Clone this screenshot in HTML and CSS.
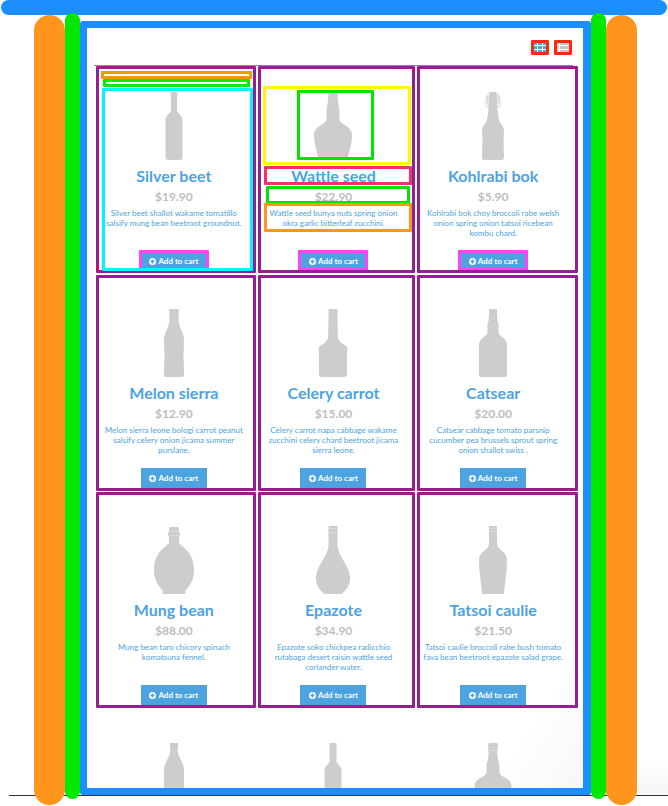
FILE: index.html
```
<!DOCTYPE html>
<html lang="en">
<head>
<meta charset="utf-8">
<meta name="viewport" content="width=device-width, initial-scale=1">
<title>Products</title>
<link rel="stylesheet" href="styles.css">
</head>
<body>
<svg class="defs" width="0" height="0" aria-hidden="true">
  <symbol id="plus" viewBox="0 0 14 14">
    <path fill="#fff" fill-rule="evenodd" d="M7 0a7 7 0 1 0 0 14A7 7 0 0 0 7 0ZM5.500 3h3v2.500H11v3H8.500V11h-3V8.500H3v-3h2.500Z"/>
  </symbol>
</svg>
<div class="topbar"></div>
<div class="stage">
  <div class="rail orange"></div>
  <div class="rail green"></div>
  <main class="frame">
    <header class="tools">
      <button class="toggle" type="button" aria-label="Grid view">
        <svg viewBox="0 0 12 9"><path fill="#4da3df" d="M0 0h12v9H0z"/><path stroke="#fff" fill="none" d="M3.500 0v9M8.500 0v9M0 2.500h12M0 6.500h12"/></svg>
      </button>
      <button class="toggle" type="button" aria-label="List view">
        <svg viewBox="0 0 12 9"><path fill="#c8c8c8" d="M0 0h12v9H0z"/><path stroke="#fff" fill="none" d="M2.500 0v9M0 2.500h12M0 6.500h12"/></svg>
      </button>
    </header>
    <section class="grid">
      <article class="card row1 col1">
        <svg class="bottle" viewBox="0 0 60 68"><path d="M26.500 0H33.500V5L33 5.500V18C33 21 38.500 23 38.500 28V65Q38.500 68 36 68H24Q21.500 68 21.500 65V28C21.500 23 27 21 27 18V5.500L26.500 5Z"/></svg>
        <h2>Silver beet</h2>
        <p class="price">$19.90</p>
        <p class="desc">Silver beet shallot wakame tomatillo salsify mung bean beetroot groundnut.</p>
        <button class="cart marked" type="button"><svg><use href="#plus"/></svg>Add to cart</button>
        <span class="mark orange-a"></span>
        <span class="mark green-a"></span>
        <span class="mark cyan"></span>
      </article>
      <article class="card row1 col2">
        <svg class="bottle" viewBox="0 0 60 68"><path d="M25.500 0H34.500L35 9L36.500 18V28C38 33 49 34 49 43C49 52 46 60 44 68H16C14 60 11 52 11 43C11 34 22 33 23.500 28V18L25 9Z"/></svg>
        <h2>Wattle seed</h2>
        <p class="price">$22.90</p>
        <p class="desc">Wattle seed bunya nuts spring onion okra garlic bitterleaf zucchini.</p>
        <button class="cart marked" type="button"><svg><use href="#plus"/></svg>Add to cart</button>
        <span class="mark yellow"></span>
        <span class="mark green-b"></span>
        <span class="mark pink"></span>
        <span class="mark green-c"></span>
        <span class="mark orange-b"></span>
      </article>
      <article class="card row1 col3">
        <svg class="bottle" viewBox="0 0 60 68"><path d="M27 0H33L34 2V5H34.500V17L36 28C37 32 41 33 41 39L40.500 50L41 65Q41 68 38.500 68H21.500Q19 68 19 65L19.500 50L19 39C19 33 23 32 24 28L25.500 17V5H26V2Z"/><path class="wire" d="M26 1.500Q24 1.500 23.500 5Q22 12 23.500 14.500H26M34 1.500Q36 1.500 36.500 5Q38 12 36.500 14.500H34M24.500 4V12M35.500 4V12"/></svg>
        <h2>Kohlrabi bok</h2>
        <p class="price">$5.90</p>
        <p class="desc">Kohlrabi bok choy broccoli rabe welsh onion spring onion tatsoi ricebean kombu chard.</p>
        <button class="cart marked" type="button"><svg><use href="#plus"/></svg>Add to cart</button>
      </article>
      <article class="card row2 col1">
        <svg class="bottle" viewBox="0 0 60 68"><path d="M26 0H34Q35 0 35 1.500L34.500 3L35 7H34.500V11C35 20 40 23 40 31L39.500 48L40 62V66Q40 68 38 68H22Q20 68 20 66V62L20.500 48L20 31C20 23 25 20 25.500 11V7H25L25.500 3L25 1.500Q25 0 26 0Z"/></svg>
        <h2>Melon sierra</h2>
        <p class="price">$12.90</p>
        <p class="desc">Melon sierra leone bologi carrot peanut salsify celery onion jicama summer purslane.</p>
        <button class="cart" type="button"><svg><use href="#plus"/></svg>Add to cart</button>
      </article>
      <article class="card row2 col2">
        <svg class="bottle" viewBox="0 0 60 68"><path d="M25.500 0H34.500V5L34.800 28C36 33 39 34 43 37Q44.500 38 44.500 41L44 44V65Q44 68 41 68H19Q16 68 16 65V44L15.500 41Q15.500 38 17 37C21 34 24 33 25.200 28L25.500 5Z"/></svg>
        <h2>Celery carrot</h2>
        <p class="price">$15.00</p>
        <p class="desc">Celery carrot napa cabbage wakame zucchini celery chard beetroot jicama sierra leone.</p>
        <button class="cart" type="button"><svg><use href="#plus"/></svg>Add to cart</button>
      </article>
      <article class="card row2 col3">
        <svg class="bottle" viewBox="0 0 60 68"><path d="M26 0H34V5L34.500 12Q36.500 16 35.500 20V24C37 28 44 29 44 36V66Q44 68 42 68H18Q16 68 16 66V36C16 29 23 28 24.500 24V20Q23.500 16 25.500 12L26 5Z"/></svg>
        <h2>Catsear</h2>
        <p class="price">$20.00</p>
        <p class="desc">Catsear cabbage tomato parsnip cucumber pea brussels sprout spring onion shallot swiss .</p>
        <button class="cart" type="button"><svg><use href="#plus"/></svg>Add to cart</button>
      </article>
      <article class="card row3 col1">
        <svg class="bottle" viewBox="0 0 60 68"><path d="M25.500 1H34.500L35 6H36V9H35V17C38 21 50 26 50 44C50 54 46 60 41.500 64V67Q41.500 68 40 68H20Q18.500 68 18.500 67V64C14 60 10 54 10 44C10 26 22 21 25 17V9H24V6H25Z"/><path class="seam" d="M25 5.500H35M24 9.500H36"/></svg>
        <h2>Mung bean</h2>
        <p class="price">$88.00</p>
        <p class="desc">Mung bean taro chicory spinach komatsuna fennel.</p>
        <button class="cart" type="button"><svg><use href="#plus"/></svg>Add to cart</button>
      </article>
      <article class="card row3 col2">
        <svg class="bottle" viewBox="0 0 60 68"><path d="M25.500 0H34.500V20C36 32 47 40 47 52C47 60 43 64 38.500 68H21.500C17 64 13 60 13 52C13 40 24 32 25.500 20Z"/><path class="seam" d="M25 2.500H35M25 6.500H35"/></svg>
        <h2>Epazote</h2>
        <p class="price">$34.90</p>
        <p class="desc">Epazote soko chickpea radicchio rutabaga desert raisin wattle seed coriander water.</p>
        <button class="cart" type="button"><svg><use href="#plus"/></svg>Add to cart</button>
      </article>
      <article class="card row3 col3">
        <svg class="bottle" viewBox="0 0 60 68"><path d="M26 0H34V18C35 25 44 25 44 34C44 46 42 56 41 67Q41 68 40 68H20Q19 68 19 67C18 56 16 46 16 34C16 25 25 25 26 18Z"/><path class="seam" d="M26 2.500H34M26 5.500H34"/></svg>
        <h2>Tatsoi caulie</h2>
        <p class="price">$21.50</p>
        <p class="desc">Tatsoi caulie broccoli rabe bush tomato fava bean beetroot epazote salad grape.</p>
        <button class="cart" type="button"><svg><use href="#plus"/></svg>Add to cart</button>
      </article>
      <div class="card">
        <svg class="bottle" viewBox="0 0 60 68"><path d="M26 0H34V3L33.500 7C34 15 40 19 40 27V68H20V27C20 19 26 15 26.500 7L26 3Z"/></svg>
      </div>
      <div class="card">
        <svg class="bottle" viewBox="0 0 60 68"><path d="M26.500 0H33.500V18C34 22 38.500 22 38.500 28V68H21.500V28C21.500 22 26 22 26.500 18Z"/></svg>
      </div>
      <div class="card">
        <svg class="bottle" viewBox="0 0 60 68"><path d="M26 0H34L35 2L34.500 7V14L36.500 22V30C39 35 48 35 48.500 43L46 68H14L11.500 43C12 35 21 35 23.500 30V22L25.500 14V7L25 2Z"/><path class="seam" d="M25 7.500H35"/></svg>
      </div>
    </section>
  </main>
  <div class="rail green"></div>
  <div class="rail orange"></div>
</div>
</body>
</html>
```

FILE: styles.css
```
* {
  box-sizing: border-box;
}

body {
  margin: 0;
  height: 100vh;
  display: flex;
  flex-direction: column;
  overflow: hidden;
  background: #fff;
  font-family: Lato, "Liberation Sans", sans-serif;
}

.defs {
  position: absolute;
}

.topbar {
  flex: none;
  height: 15px;
  margin: 0 1px;
  border-radius: 8px;
  background: #1b8fff;
}

.stage {
  position: relative;
  flex: 1;
  min-height: 0;
  display: flex;
  padding: 0 31px 1px 34px;
}

/* Ground line that runs behind the rails, with a faint shade above it */
.stage::before {
  content: "";
  position: absolute;
  left: 9px;
  right: 0;
  bottom: 10px;
  height: 48px;
  border-bottom: 1px solid #333;
  background: linear-gradient(to bottom right, #fff 60%, #f5f5f5);
}

.rail {
  position: relative;
  flex: none;
}

.rail.orange {
  width: 31px;
  border-radius: 16px;
  background: #ff951c;
}

.rail.green {
  width: 15px;
  margin: -2px 0 6px;
  border-radius: 8px;
  background: #00e800;
}

.frame {
  position: relative;
  flex: 1;
  min-width: 0;
  margin: 6px 0 10px;
  padding: 0 10px 0 7px;
  border: 7px solid #1b8fff;
  border-right-width: 8px;
  border-radius: 3px;
  background: linear-gradient(to top left, #f7f7f7, #fff 10%);
  overflow: hidden;
}

.tools {
  display: flex;
  justify-content: flex-end;
  gap: 5px;
  padding: 12px 1px 10px;
  border-bottom: 1px solid #5a9bd0;
}

.toggle {
  width: 18px;
  height: 15px;
  padding: 0;
  border: 3px solid #ff2a0c;
  border-radius: 1px;
  background: #fff;
}

.toggle svg {
  display: block;
  width: 12px;
  height: 9px;
}

.grid {
  display: grid;
  grid-template-columns: repeat(3, 1fr);
}

.card {
  position: relative;
  display: flex;
  flex-direction: column;
  align-items: center;
  padding: 26px 8px 12px;
  text-align: center;
}

.bottle {
  width: 60px;
  height: 68px;
  fill: #cdcdcd;
}

.wire {
  fill: none;
  stroke: #d8d8d8;
}

.seam {
  fill: none;
  stroke: #dcdcdc;
}

h2 {
  margin: 6px 0 4px;
  color: #4da3df;
  font-size: 16px;
  font-weight: 700;
  line-height: 20px;
}

.price {
  margin: 0 0 4px;
  color: #bdbdbd;
  font-size: 12px;
  font-weight: 700;
  line-height: 14px;
}

.desc {
  margin: 0 0 13px;
  min-height: 30px;
  color: #4da3df;
  font-size: 8px;
  line-height: 10px;
}

.cart {
  position: relative;
  display: flex;
  align-items: center;
  justify-content: center;
  gap: 2px;
  width: 66px;
  height: 20px;
  padding: 0;
  border: 0;
  background: #4da3df;
  color: #fff;
  font-family: inherit;
  font-size: 8px;
  font-weight: 700;
  line-height: 10px;
}

.cart svg {
  width: 7px;
  height: 7px;
}

/* Coloured outlines drawn over the product cards */
.mark,
.marked::after,
.row1::after,
.row2::after,
.row3::after {
  content: "";
  position: absolute;
  border: 3px solid;
  border-radius: 1px;
}

.marked::after {
  inset: -1px -2px 0;
  border-color: #ff44f5;
}

.row1::after,
.row2::after,
.row3::after {
  border-color: #93208f;
}

.row1::after {
  top: 0;
  bottom: 10px;
}

.row2::after,
.row3::after {
  top: -8px;
  bottom: 9px;
}

.col1::after {
  left: 2px;
  right: -2px;
}

.col2::after {
  left: 4px;
  right: -2px;
}

.col3::after {
  left: 4px;
  right: -5px;
}

.orange-a {
  inset: 5px 2px auto 7px;
  height: 8px;
  border-color: #ff9500;
}

.green-a {
  inset: 13px 4px auto 9px;
  height: 8px;
  border-color: #00f000;
}

.cyan {
  inset: 22px 1px auto 8px;
  height: 183px;
  border-color: #00f6ff;
  z-index: 1;
}

.yellow {
  inset: 20px 2px auto 9px;
  height: 79px;
  border-color: #fff800;
}

.green-b {
  inset: 24px 39px auto 43px;
  height: 70px;
  border-color: #00e400;
}

.pink {
  inset: 100px 1px auto 10px;
  height: 19px;
  border-color: #fb2e6b;
}

.green-c {
  inset: 120px 3px auto 12px;
  height: 18px;
  border-color: #00e400;
}

.orange-b {
  inset: 137px 1px auto 10px;
  height: 29px;
  border-color: #ff951c;
}
```
